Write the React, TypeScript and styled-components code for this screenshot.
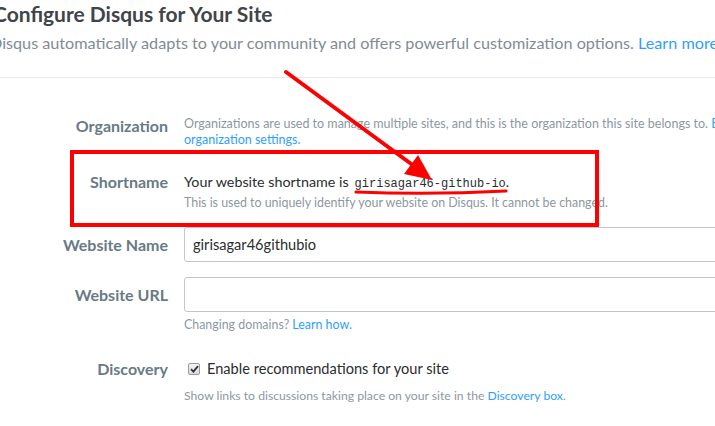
import { FC } from 'react';
import styled, { createGlobalStyle } from 'styled-components';

const GlobalStyle = createGlobalStyle`
  html, body {
    margin: 0;
    padding: 0;
    background: #ffffff;
    overflow: hidden;
  }
  body {
    font-family: Lato, "Open Sans", sans-serif;
    color: #2a2e2e;
  }
`;

// #region styles
const Page = styled.div`
  position: relative;
  width: 740px;
  height: 426px;
  overflow: hidden;
`;

const Content = styled.div`
  margin-left: -7px;
  width: 900px;
`;

const Title = styled.h1`
  margin: 0;
  font-size: 21px;
  line-height: 28px;
  font-weight: 700;
  color: #3f4549;
  white-space: nowrap;
`;

const Subtitle = styled.p`
  margin: 3px 0 0 -3px;
  font-size: 16.2px;
  line-height: 24px;
  color: #7f8c95;
  white-space: nowrap;
`;

const Divider = styled.hr`
  margin: 22px 0 0;
  border: none;
  border-top: 1px solid #e7e9ee;
`;

const Row = styled.div<{ $top: number; $center?: boolean }>`
  display: grid;
  grid-template-columns: 175px 560px;
  column-gap: 16px;
  margin-top: ${(p) => p.$top}px;
  align-items: ${(p) => (p.$center ? 'center' : 'start')};
`;

const Label = styled.div`
  text-align: right;
  font-size: 16px;
  line-height: 20px;
  font-weight: 700;
  color: #687a86;
`;

const Field = styled.div``;

const Help = styled.div<{ $top?: number; $size?: number }>`
  margin-top: ${(p) => p.$top ?? 0}px;
  font-size: ${(p) => p.$size ?? 12.4}px;
  line-height: 16px;
  color: #8c98a2;
  white-space: nowrap;
`;

const Link = styled.a`
  color: #2e9fff;
  text-decoration: none;
`;

const Text = styled.div`
  font-size: 14.3px;
  line-height: 20px;
  color: #2a2e2e;
  white-space: nowrap;
`;

const Code = styled.code`
  font-family: "Liberation Mono", "DejaVu Sans Mono", monospace;
  font-size: 12px;
  color: #2a2e2e;
  margin-left: 6px;
`;

const Input = styled.input`
  box-sizing: border-box;
  display: block;
  width: 560px;
  height: 35px;
  padding: 0 8px;
  border: 1px solid #c2c6cc;
  border-radius: 3px;
  font-family: Lato, "Open Sans", sans-serif;
  font-size: 14.6px;
  color: #2a2e2e;
  background: #fff;
  outline: none;
`;

const CheckRow = styled.label`
  display: flex;
  align-items: center;
  gap: 7px;
  padding-left: 4px;
  font-size: 14.6px;
  line-height: 20px;
  color: #2a2e2e;
  white-space: nowrap;
`;

const CheckBox = styled.span`
  box-sizing: border-box;
  display: inline-flex;
  align-items: center;
  justify-content: center;
  width: 12px;
  height: 12px;
  border: 1px solid #9a9a9a;
  border-radius: 2px;
  background: linear-gradient(#f4f4f4, #dcdcdc);
`;

const Annotations = styled.svg`
  position: absolute;
  left: 0;
  top: 0;
  pointer-events: none;
`;
// #endregion

const Check: FC = () => (
  <svg width="9" height="8" viewBox="0 0 9 8">
    <path d="M1 4.2 L3.4 6.6 L8 1.2" fill="none" stroke="#333" strokeWidth="1.8" />
  </svg>
);

const App: FC = () => {
  return (
    <Page>
      <GlobalStyle />
      <Content>
        <Title>Configure Disqus for Your Site</Title>
        <Subtitle>
          Disqus automatically adapts to your community and offers powerful customization options.{' '}
          <Link>Learn more</Link>
        </Subtitle>
        <Divider />

        <Row $top={38}>
          <Label>Organization</Label>
          <Field>
            <Help $size={12.5}>
              Organizations are used to manage multiple sites, and this is the organization this site belongs to.{' '}
              <Link>Edit</Link>
              <br />
              <Link>organization settings.</Link>
            </Help>
          </Field>
        </Row>

        <Row $top={24}>
          <Label>Shortname</Label>
          <Field>
            <Text>
              Your website shortname is<Code>girisagar46-github-io</Code>.
            </Text>
            <Help $top={1}>This is used to uniquely identify your website on Disqus. It cannot be changed.</Help>
          </Field>
        </Row>

        <Row $top={16} $center>
          <Label>Website Name</Label>
          <Input defaultValue="girisagar46githubio" />
        </Row>

        <Row $top={15} $center>
          <Label>Website URL</Label>
          <Input defaultValue="" />
        </Row>
        <Row $top={5}>
          <div />
          <Help>
            Changing domains? <Link>Learn how.</Link>
          </Help>
        </Row>

        <Row $top={26}>
          <Label>Discovery</Label>
          <Field>
            <CheckRow>
              <CheckBox>
                <Check />
              </CheckBox>
              Enable recommendations for your site
            </CheckRow>
            <Help $top={9} $size={12.2}>
              Show links to discussions taking place on your site in the <Link>Discovery box</Link>.
            </Help>
          </Field>
        </Row>
      </Content>

      <Annotations width="715" height="426" viewBox="0 0 715 426">
        <rect x="72" y="152" width="525" height="73" fill="none" stroke="#ff0000" strokeWidth="4" />
        <path d="M356 192 Q430 195 506 191" fill="none" stroke="#ff0000" strokeWidth="3" strokeLinecap="round" />
        <line x1="286" y1="72" x2="414" y2="166" stroke="#ff0000" strokeWidth="4" strokeLinecap="round" />
        <polygon points="432,180 404,174 418,155" fill="#ff0000" />
      </Annotations>
    </Page>
  );
};

export default App;
